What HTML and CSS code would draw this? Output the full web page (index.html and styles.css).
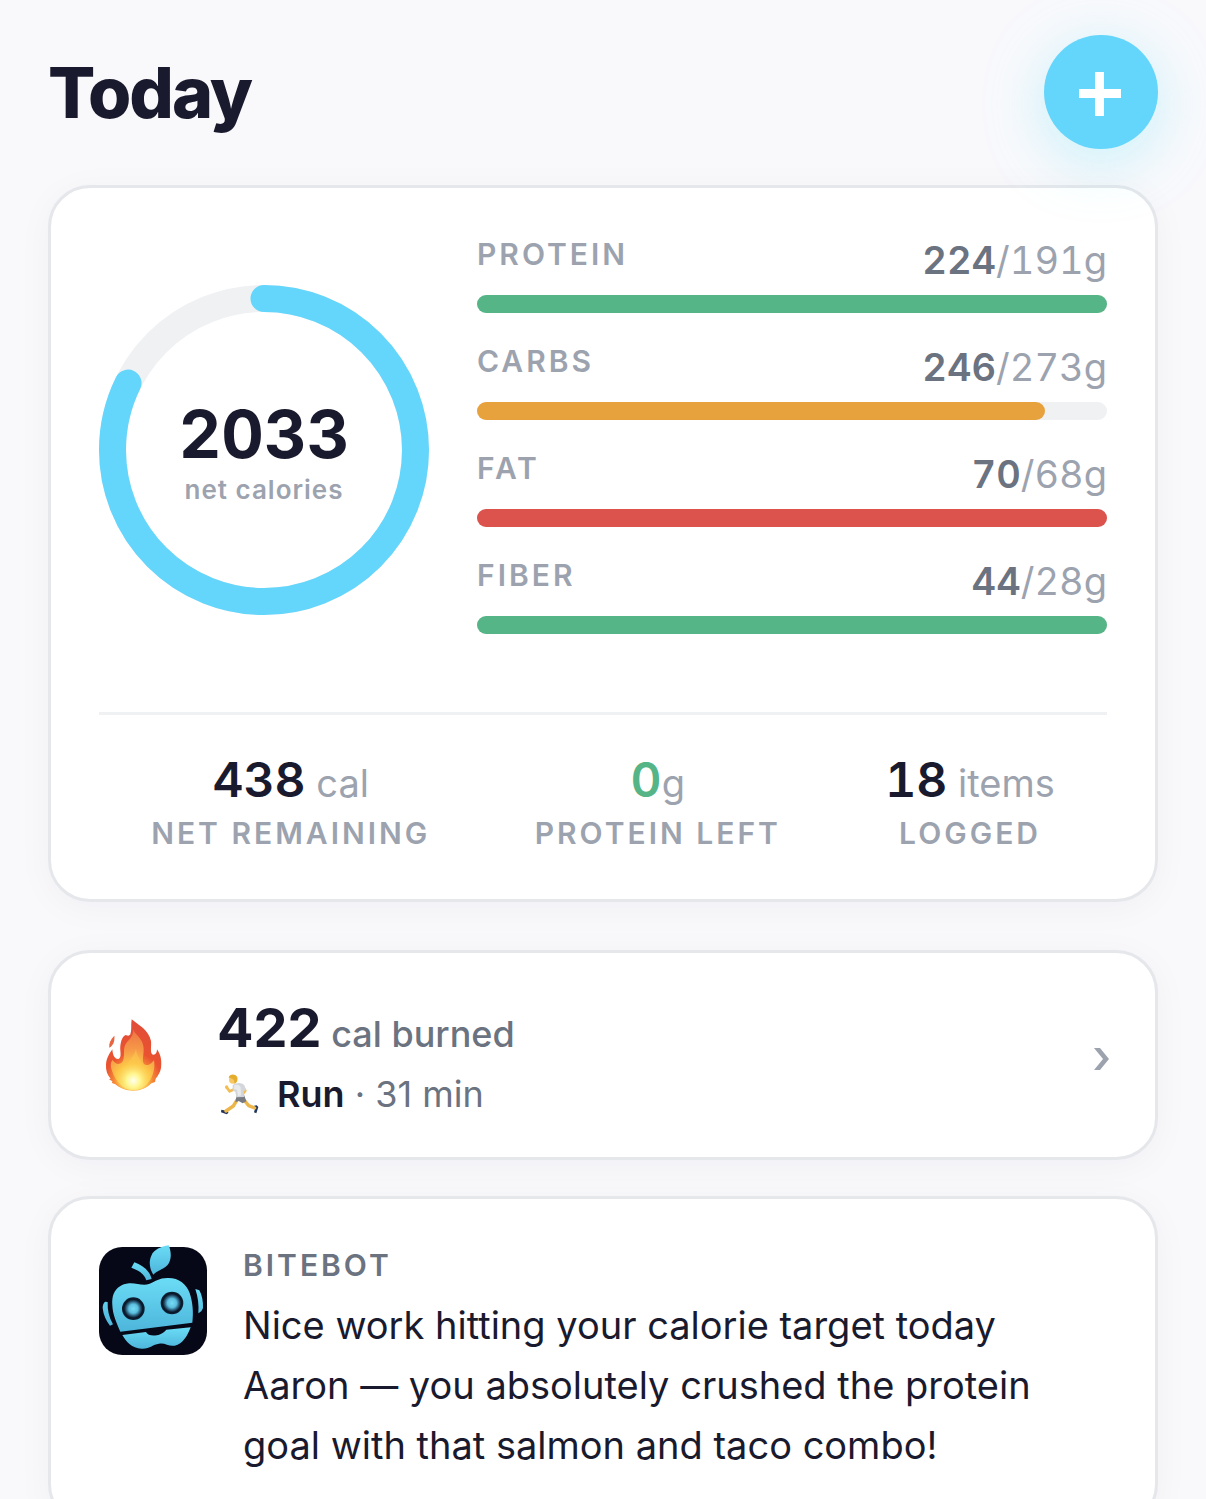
FILE: index.html
```html
<!DOCTYPE html>
<html lang="en">
<head>
<meta charset="utf-8">
<meta name="viewport" content="width=device-width, initial-scale=1">
<title>Today</title>
<link rel="stylesheet" href="styles.css">
</head>
<body>
<main class="screen">
  <header class="topbar">
    <h1 class="title">Today</h1>
    <button class="add-button" type="button" aria-label="Add food">
      <svg class="add-icon" viewBox="0 0 48 48" aria-hidden="true"><path d="M2 21h16V4h9v17h17v9H27v18h-9V30H2z" fill="#fff"/></svg>
    </button>
  </header>

  <section class="card summary">
    <div class="overview">
      <div class="ring">
        <svg class="ring-chart" viewBox="0 0 330 330" aria-hidden="true">
          <circle class="ring-track" cx="165" cy="165" r="151.5"/>
          <circle class="ring-value" cx="165" cy="165" r="151.5" pathLength="2471" stroke-dasharray="2033 2471" transform="rotate(-90 165 165)"/>
        </svg>
        <div class="ring-text">
          <span class="ring-number">2033</span>
          <span class="ring-label">net calories</span>
        </div>
      </div>
      <div class="macros">
        <div class="macro">
          <div class="macro-head"><span class="label">Protein</span><span class="amount"><b>224</b>/191g</span></div>
          <div class="bar"><div class="fill green" style="width:100%"></div></div>
        </div>
        <div class="macro">
          <div class="macro-head"><span class="label">Carbs</span><span class="amount"><b>246</b>/273g</span></div>
          <div class="bar"><div class="fill orange" style="width:90.1%"></div></div>
        </div>
        <div class="macro">
          <div class="macro-head"><span class="label">Fat</span><span class="amount"><b>70</b>/68g</span></div>
          <div class="bar"><div class="fill red" style="width:100%"></div></div>
        </div>
        <div class="macro">
          <div class="macro-head"><span class="label">Fiber</span><span class="amount"><b>44</b>/28g</span></div>
          <div class="bar"><div class="fill green" style="width:100%"></div></div>
        </div>
      </div>
    </div>
    <div class="stats">
      <div class="stat"><span class="stat-value"><b>438</b> cal</span><span class="label">Net remaining</span></div>
      <div class="stat"><span class="stat-value"><b class="good">0</b>g</span><span class="label">Protein left</span></div>
      <div class="stat"><span class="stat-value"><b>18</b> items</span><span class="label">Logged</span></div>
    </div>
  </section>

  <a class="card activity" href="#activity">
    <svg class="flame" viewBox="57 60 210 210" aria-hidden="true">
      <defs>
        <radialGradient id="flameOuter" gradientUnits="userSpaceOnUse" cx="160" cy="245" r="180">
          <stop offset="0" stop-color="#ffd34d"/><stop offset=".3" stop-color="#f68f38"/><stop offset=".48" stop-color="#ea5330"/><stop offset="1" stop-color="#e04c38"/>
        </radialGradient>
        <radialGradient id="flameMid" gradientUnits="userSpaceOnUse" cx="160" cy="240" r="150">
          <stop offset="0" stop-color="#fff7a8"/><stop offset=".3" stop-color="#fdcc48"/><stop offset=".6" stop-color="#f69a48"/><stop offset="1" stop-color="#ee7444"/>
        </radialGradient>
        <radialGradient id="flameCore" gradientUnits="userSpaceOnUse" cx="160" cy="242" r="60">
          <stop offset="0" stop-color="#fffff0"/><stop offset=".35" stop-color="#fff68e"/><stop offset="1" stop-color="#fbc544" stop-opacity="0"/>
        </radialGradient>
      </defs>
      <path fill="#e8653f" d="M103 107C91 119 86 131 88 143C99 137 105 124 103 107Z"/>
      <path fill="url(#flameOuter)" d="M155 58C177 76 207 91 213 123C215 139 209 161 219 164C227 165 231 157 231 148C242 163 246 181 243 204C241 216 235 226 227 236L225 246L214 250C199 265 182 272 160 272C138 272 121 265 106 253L96 249L97 244L87 238L92 236C82 225 77 210 78 194C79 175 88 161 97 148C98 165 104 178 115 177C127 173 119 153 121 138C123 123 126 111 137 105C143 107 147 109 151 103C156 90 152 75 155 58Z"/>
      <path fill="url(#flameMid)" d="M160 88C163 104 186 112 190 138C194 160 184 180 192 192C201 201 216 190 222 180C226 203 220 229 206 246C194 263 178 269 160 269C132 268 107 247 96 212C90 197 92 185 98 180C104 190 116 197 126 187C137 174 127 148 137 132C145 119 160 114 160 88Z"/>
      <path fill="#fdc94e" opacity=".55" d="M168 146C171 173 188 184 190 208C194 221 208 214 214 208C208 238 192 264 160 269C129 264 113 240 106 211C117 220 131 217 137 203C142 183 162 174 168 146Z"/>
      <ellipse fill="url(#flameCore)" cx="160" cy="232" rx="58" ry="39"/>
    </svg>
    <div class="activity-text">
      <p class="burned"><b>422</b> cal burned</p>
      <p class="workout">
        <svg class="runner" viewBox="414 219 126 126" aria-hidden="true">
          <path fill="#20365f" d="M427 329L447 333L448 339L443 343L426 337ZM525 317L533 316L538 321L532 340L525 337L528 326Z"/>
          <path fill="none" stroke="#edb64a" stroke-width="10" stroke-linecap="round" stroke-linejoin="round" d="M476 297L463 318L441 333M495 300L509 317L527 324"/>
          <path fill="none" stroke="#f2bd55" stroke-width="8" stroke-linecap="round" stroke-linejoin="round" d="M466 268L452 274L443 262M491 260L499 272L488 286"/>
          <path fill="#777a80" d="M473 286L495 284L502 304L491 310L479 303L469 307Z"/>
          <path fill="#d3d6da" d="M461 255C472 247 488 246 496 256L501 269L494 274L495 291L472 292L469 275L461 271Z"/>
          <path fill="#e9eaec" d="M466 256C474 252 482 254 485 262L486 286L477 288L474 270L465 267Z"/>
          <circle cx="462" cy="239" r="12" fill="#f6c868"/>
          <path fill="#e4ad2d" d="M449 233C451 221 468 220 474 230C478 238 474 248 467 251C467 242 463 234 449 233Z"/>
          <circle cx="443" cy="261" r="5" fill="#f4bd50"/>
        </svg>
        <span><b>Run</b> · 31 min</span>
      </p>
    </div>
    <svg class="chevron" viewBox="0 0 15 30" aria-hidden="true"><path d="M2 8h6l9 11-9 11H2l9-11z" fill="#9ca3af"/></svg>
  </a>

  <section class="card message">
    <svg class="avatar" viewBox="27 36 324 324" role="img" aria-label="BiteBot">
      <defs>
        <linearGradient id="botSkin" x1="0" y1="0" x2="0" y2="1"><stop offset="0" stop-color="#6bdcf6"/><stop offset="1" stop-color="#4db5db"/></linearGradient>
        <radialGradient id="botEye"><stop offset="0" stop-color="#75dcf5"/><stop offset=".4" stop-color="#5cbfe0"/><stop offset=".68" stop-color="#204a66"/><stop offset=".82" stop-color="#0a1626"/><stop offset="1" stop-color="#0c2236"/></radialGradient>
      </defs>
      <rect x="27" y="36" width="324" height="324" rx="70" fill="#070817"/>
      <path fill="url(#botSkin)" d="M236 31C244 49 245 72 235 87C225 102 202 106 190 119C180 103 175 82 184 62C192 43 213 35 236 31Z"/>
      <path fill="url(#botSkin)" d="M133 82C158 91 179 107 185 132L169 136C164 119 147 106 124 98Z"/>
      <path fill="url(#botSkin)" d="M71 176C80 158 95 147 117 145C139 143 159 154 179 146C198 139 207 129 232 129C267 128 289 147 299 174C308 202 311 230 307 263L91 290C80 265 68 239 67 211C66 198 67 186 71 176Z"/>
      <path fill="url(#botSkin)" d="M97 300L168 291C175 306 209 307 229 284L302 277C293 301 279 327 254 332C236 335 226 323 207 326C188 328 181 342 155 341C125 339 109 321 97 300Z"/>
      <path fill="url(#botSkin)" d="M45 200L53 201C52 225 57 247 69 268L60 272C48 257 40 240 38 219C38 211 40 205 45 200ZM316 162L328 166C336 180 340 200 339 219C336 227 332 231 325 235C327 209 324 186 316 162Z"/>
      <circle cx="130" cy="221" r="34" fill="url(#botEye)"/>
      <circle cx="246" cy="204" r="34" fill="url(#botEye)"/>
    </svg>
    <div class="message-text">
      <h2 class="label sender">BiteBot</h2>
      <p class="body">Nice work hitting your calorie target today Aaron — you absolutely crushed the protein goal with that salmon and taco combo!</p>
    </div>
  </section>
</main>
</body>
</html>
```
FILE: styles.css
```css
:root {
  --ink: #1a1a2e;
  --muted: #6b7280;
  --faint: #9ca3af;
  --accent: #64d5fb;
  --track: #f0f1f3;
  --line: #e5e7eb;
  --green: #56b586;
}

* {
  box-sizing: border-box;
}

body {
  margin: 0;
  background: #f9f9fc;
  color: var(--ink);
  font-family: Inter, "Liberation Sans", sans-serif;
}

h1, h2, p {
  margin: 0;
}

b {
  font-weight: 700;
}

svg {
  display: block;
  flex: none;
  overflow: visible;
}

.screen {
  height: 100vh;
  overflow: hidden;
  padding: 35px 48px 0;
}

.topbar {
  display: flex;
  align-items: center;
  justify-content: space-between;
  margin-bottom: 36px;
}

.title {
  padding-top: 2px;
  font-size: 70px;
  font-weight: 800;
  line-height: 84px;
  letter-spacing: -2px;
}

.add-button {
  display: grid;
  place-items: center;
  width: 114px;
  height: 114px;
  padding: 0;
  border: 0;
  border-radius: 50%;
  background: var(--accent);
  box-shadow: 0 12px 60px rgba(100, 225, 245, 0.35);
}

.add-icon {
  width: 48px;
  height: 48px;
}

.card {
  background: #fff;
  border: 3px solid var(--line);
  border-radius: 42px;
  box-shadow: 0 6px 36px rgba(26, 26, 46, 0.04);
}

.label {
  color: var(--faint);
  font-size: 30px;
  font-weight: 600;
  line-height: 36px;
  letter-spacing: 3px;
  text-transform: uppercase;
}

.summary {
  padding: 48px;
  margin-bottom: 48px;
}

.overview {
  display: flex;
  align-items: center;
  gap: 48px;
  padding-bottom: 48px;
  border-bottom: 3px solid var(--track);
}

.ring {
  display: grid;
  flex: none;
  width: 330px;
}

.ring-chart,
.ring-text {
  grid-area: 1 / 1;
}

.ring-track,
.ring-value {
  fill: none;
  stroke: var(--track);
  stroke-width: 27px;
}

.ring-value {
  stroke: var(--accent);
  stroke-linecap: round;
}

.ring-text {
  display: flex;
  flex-direction: column;
  align-items: center;
  justify-content: center;
  gap: 6px;
  padding-top: 6px;
}

.ring-number {
  font-size: 66px;
  font-weight: 700;
  line-height: 66px;
  font-variant-numeric: tabular-nums;
}

.ring-label {
  color: var(--faint);
  font-size: 26px;
  font-weight: 600;
  line-height: 33px;
  letter-spacing: 1px;
}

.macros {
  flex: 1;
}

.macro {
  margin-bottom: 30px;
}

.macro-head {
  display: flex;
  justify-content: space-between;
  align-items: flex-start;
  margin-bottom: 11px;
}

.amount {
  color: var(--faint);
  font-size: 38px;
  line-height: 48px;
  font-variant-numeric: tabular-nums;
}

.amount b {
  color: var(--muted);
  font-weight: 600;
}

.bar {
  height: 18px;
  border-radius: 9px;
  background: var(--track);
}

.fill {
  height: 100%;
  border-radius: 9px;
}

.green {
  background: var(--green);
}

.orange {
  background: #e8a23d;
}

.red {
  background: #dc524d;
}

.stats {
  display: flex;
  justify-content: space-around;
  padding-top: 36px;
}

.stat {
  display: flex;
  flex-direction: column;
  align-items: center;
  gap: 3px;
}

.stat-value {
  color: var(--faint);
  font-size: 38px;
  line-height: 58px;
}

.stat-value b {
  color: var(--ink);
  font-size: 48px;
  font-weight: 600;
  font-variant-numeric: tabular-nums;
}

.stat-value .good {
  color: var(--green);
}

.activity {
  display: flex;
  align-items: center;
  gap: 48px;
  padding: 42px 48px;
  margin-bottom: 36px;
  color: var(--muted);
  font-size: 36px;
  text-decoration: none;
}

.flame {
  width: 70px;
  height: 70px;
}

.activity-text {
  display: flex;
  flex: 1;
  flex-direction: column;
  gap: 6px;
}

.activity b {
  color: var(--ink);
}

.burned {
  font-weight: 500;
  line-height: 66px;
}

.burned b {
  font-size: 54px;
}

.workout {
  display: flex;
  align-items: center;
  gap: 18px;
  line-height: 42px;
}

.workout b {
  font-weight: 600;
}

.runner {
  width: 42px;
  height: 42px;
}

.chevron {
  width: 15px;
  height: 30px;
}

.message {
  display: flex;
  align-items: flex-start;
  gap: 36px;
  padding: 48px;
}

.avatar {
  width: 108px;
  height: 108px;
}

.message-text {
  flex: 1;
}

.sender {
  margin-bottom: 12px;
  color: var(--muted);
}

.body {
  font-size: 38px;
  line-height: 60px;
}
```
